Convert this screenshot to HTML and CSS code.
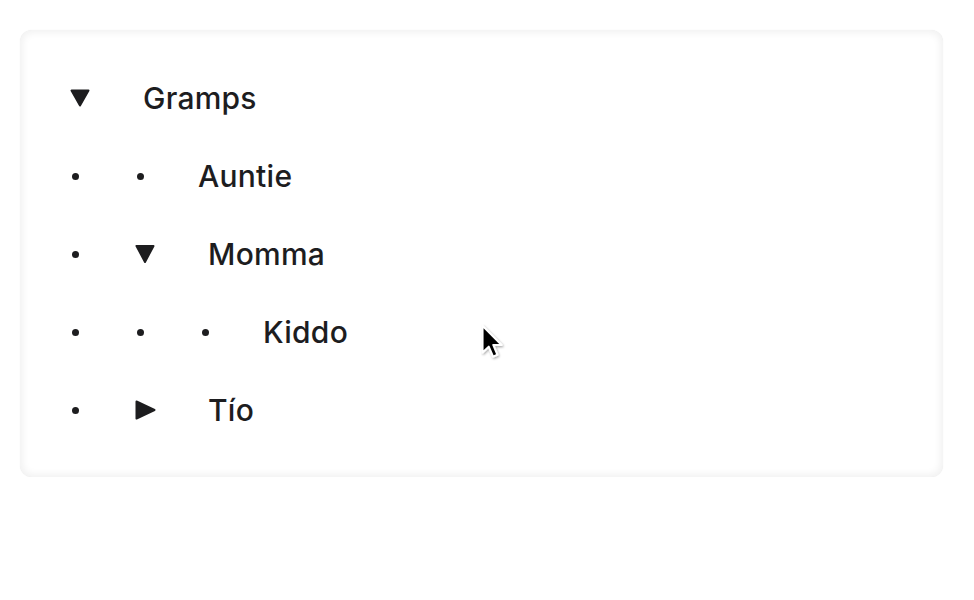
FILE: index.html
```html
<!DOCTYPE html>
<html>
<head>
<meta charset="utf-8">
<link rel="stylesheet" href="styles.css">
</head>
<body>
<div class="card">
  <ul class="tree">
    <li class="row">
      <span class="toggle"><svg class="tri" width="20" height="18" viewBox="0 0 20 18"><polygon points="1.5,1.5 18.5,1.5 10,16.5" /></svg></span>
      <span class="label">Gramps</span>
    </li>
    <li class="row">
      <span class="guide"><span class="dot"></span></span>
      <span class="leaf"><span class="dot"></span></span>
      <span class="label">Auntie</span>
    </li>
    <li class="row">
      <span class="guide"><span class="dot"></span></span>
      <span class="toggle"><svg class="tri" width="20" height="20" viewBox="0 0 20 20"><polygon points="1.5,2 18.5,2 10,18" /></svg></span>
      <span class="label">Momma</span>
    </li>
    <li class="row">
      <span class="guide"><span class="dot"></span></span>
      <span class="guide"><span class="dot"></span></span>
      <span class="leaf"><span class="dot"></span></span>
      <span class="label">Kiddo</span>
    </li>
    <li class="row">
      <span class="guide"><span class="dot"></span></span>
      <span class="toggle"><svg class="tri" width="21" height="20" viewBox="0 0 21 20"><polygon points="1.5,1.5 19.5,10 1.5,18.5" /></svg></span>
      <span class="label">Tío</span>
    </li>
  </ul>
</div>
<svg class="cursor" width="31" height="41" viewBox="0 0 20 26">
  <defs>
    <filter id="sh" x="-30%" y="-30%" width="160%" height="160%">
      <feDropShadow dx="0.6" dy="0.8" stdDeviation="0.6" flood-color="#000" flood-opacity="0.35"/>
    </filter>
  </defs>
  <path filter="url(#sh)" d="M1,1 L1,18.2 L5,14.4 L7.8,20.8 L10.6,19.6 L7.9,13.3 L13.3,13.3 Z" fill="#000" stroke="#fff" stroke-width="1.3" stroke-linejoin="round"/>
</svg>
</body>
</html>
```
FILE: styles.css
```css
html, body {
  margin: 0;
  padding: 0;
  background: #ffffff;
}
body {
  padding: 30px 31px 0 20px;
  font-family: Inter, "Noto Sans", "Liberation Sans", sans-serif;
  color: #1d1d1f;
}
.card {
  height: 447px;
  box-sizing: border-box;
  border-radius: 12px;
  background: #fff;
  box-shadow: inset 0 0 7px 3px rgba(0, 0, 0, 0.055), 0 0 1px rgba(0, 0, 0, 0.1);
  padding: 29px 0 0 50px;
}
.tree {
  list-style: none;
  margin: 0;
  padding: 0;
}
.row {
  display: flex;
  align-items: center;
  height: 78px;
}
.guide {
  width: 65px;
  flex: none;
  display: flex;
  align-items: center;
}
.leaf {
  width: 63px;
  flex: none;
  display: flex;
  align-items: center;
}
.toggle {
  width: 73px;
  flex: none;
  display: flex;
  align-items: center;
}
.dot {
  display: block;
  width: 7px;
  height: 7px;
  margin-left: 1.5px;
  border-radius: 50%;
  background: #1d1d1f;
}
.tri {
  display: block;
}
.tri polygon {
  fill: #1d1d1f;
  stroke: #1d1d1f;
  stroke-width: 2;
  stroke-linejoin: round;
}
.label {
  font-size: 30px;
  font-weight: 500;
  line-height: 1;
  letter-spacing: 0.25px;
}
.cursor {
  position: absolute;
  left: 481px;
  top: 324px;
}
```
